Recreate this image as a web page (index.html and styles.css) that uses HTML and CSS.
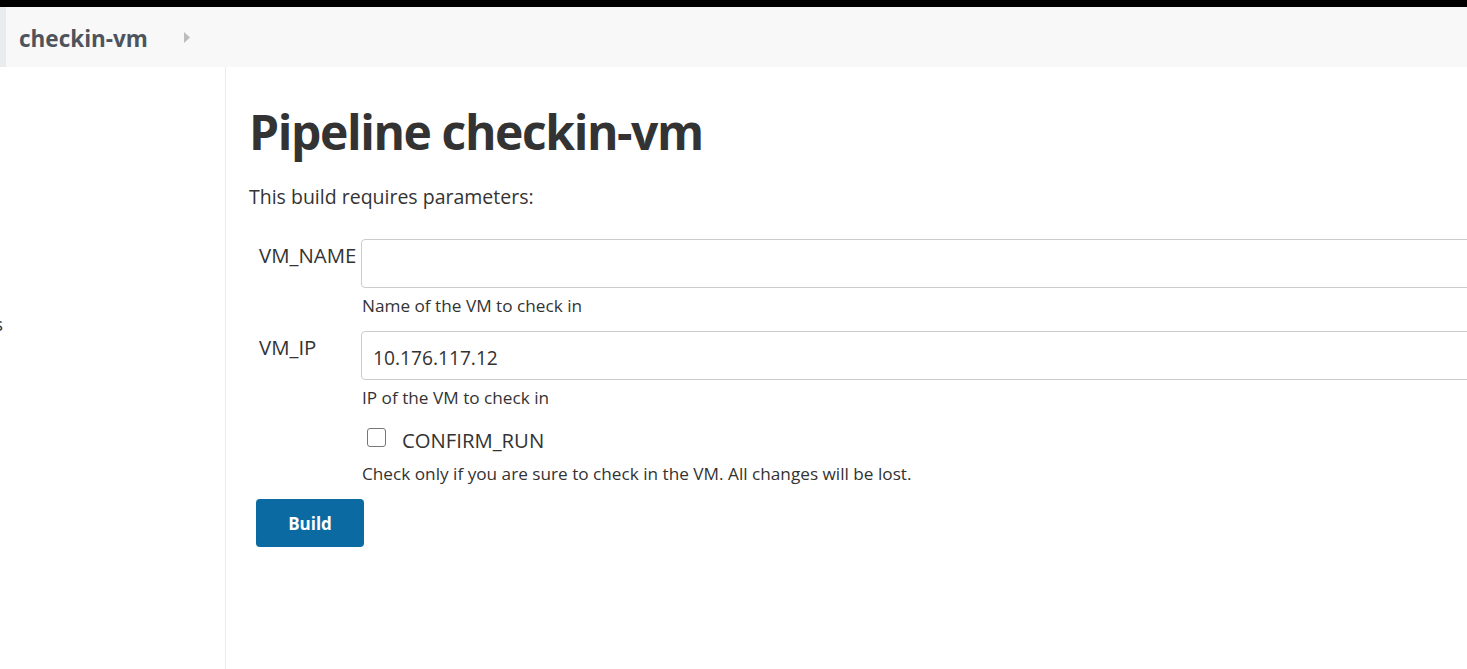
FILE: index.html
```html
<!DOCTYPE html>
<html lang="en">
<head>
<meta charset="utf-8">
<title>checkin-vm</title>
<link rel="stylesheet" href="styles.css">
</head>
<body>
<div class="topbar"></div>
<div class="breadcrumbs">
  <div class="crumb-strip"></div>
  <a class="crumb" href="#">checkin-vm</a>
  <svg class="crumb-arrow" width="6" height="11" viewBox="0 0 6 11"><polygon points="0,0 6,5.5 0,11" fill="#bcbcbc"/></svg>
</div>
<div class="page">
  <aside class="side"><span class="side-cut">s</span></aside>
  <main class="main">
    <h1 class="title">Pipeline checkin-vm</h1>
    <p class="intro">This build requires parameters:</p>
    <form class="params">
      <label class="p-label" for="vmname">VM_NAME</label>
      <div class="p-field">
        <input class="p-input" id="vmname" type="text" value="">
        <div class="p-help">Name of the VM to check in</div>
      </div>
      <label class="p-label" for="vmip">VM_IP</label>
      <div class="p-field">
        <input class="p-input" id="vmip" type="text" value="10.176.117.12">
        <div class="p-help">IP of the VM to check in</div>
      </div>
      <div class="p-label"></div>
      <div class="p-field">
        <label class="p-check"><span class="box"></span><span>CONFIRM_RUN</span></label>
        <div class="p-help">Check only if you are sure to check in the VM. All changes will be lost.</div>
      </div>
    </form>
    <button class="build" type="button">Build</button>
  </main>
</div>
</body>
</html>
```
FILE: styles.css
```css
html, body {
  margin: 0;
  padding: 0;
  overflow: hidden;
  background: #fff;
}
body {
  font-family: "Open Sans", "Noto Sans", sans-serif;
  color: #333;
  width: 1467px;
  height: 669px;
}
.topbar {
  height: 7px;
  background: #000;
}
.breadcrumbs {
  height: 60px;
  background: #f8f8f8;
  display: flex;
  align-items: center;
}
.crumb-strip {
  width: 6px;
  align-self: stretch;
  background: #e8ecef;
}
.crumb {
  margin-left: 13px;
  margin-top: 3px;
  font-size: 22.5px;
  font-weight: 700;
  color: #4d545d;
  text-decoration: none;
}
.crumb-arrow {
  margin-left: 36px;
  margin-top: 1px;
}
.page {
  display: flex;
  height: 602px;
}
.side {
  width: 225px;
  border-right: 1px solid #ebebeb;
  flex-shrink: 0;
  position: relative;
  overflow: hidden;
}
.side-cut {
  position: absolute;
  left: -6px;
  top: 244px;
  font-size: 19px;
  color: #333;
}
.main {
  padding-left: 23px;
  flex: 1;
  min-width: 0;
}
.title {
  margin: 33px 0 0 0;
  font-size: 48px;
  line-height: 64px;
  font-weight: 700;
  color: #333;
  letter-spacing: -1.4px;
}
.intro {
  margin: 20px 0 0 0;
  font-size: 19.5px;
  line-height: 26px;
}
.params {
  margin-top: 29px;
  display: grid;
  grid-template-columns: 112px 1200px;
}
.p-label {
  padding-left: 10px;
  padding-top: 4px;
  font-size: 20.4px;
  line-height: 24px;
  white-space: nowrap;
}
.p-field {
  display: flex;
  flex-direction: column;
}
.p-input {
  box-sizing: border-box;
  width: 1200px;
  height: 49px;
  border: 1px solid #cccccc;
  border-radius: 4px;
  padding: 4px 11px 0 11px;
  font-family: inherit;
  font-size: 19.2px;
  color: #333;
  outline: none;
  margin: 0;
}
.p-help {
  font-size: 17.2px;
  line-height: 22px;
  padding-left: 1px;
  margin-top: 7px;
  margin-bottom: 14px;
}
.p-check {
  display: flex;
  align-items: flex-start;
  padding-left: 6px;
  font-size: 20.3px;
  line-height: 24px;
  margin-top: 5px;
  margin-bottom: 4px;
}
.box {
  box-sizing: border-box;
  width: 19px;
  height: 19px;
  border: 1.5px solid #777;
  border-radius: 3px;
  margin-right: 16px;
}
.build {
  display: block;
  margin: 0 0 0 7px;
  width: 108px;
  height: 48px;
  background: #0b6aa2;
  color: #fff;
  border: none;
  border-radius: 4px;
  font-family: inherit;
  font-size: 17px;
  font-weight: 700;
  padding: 0;
}
```
